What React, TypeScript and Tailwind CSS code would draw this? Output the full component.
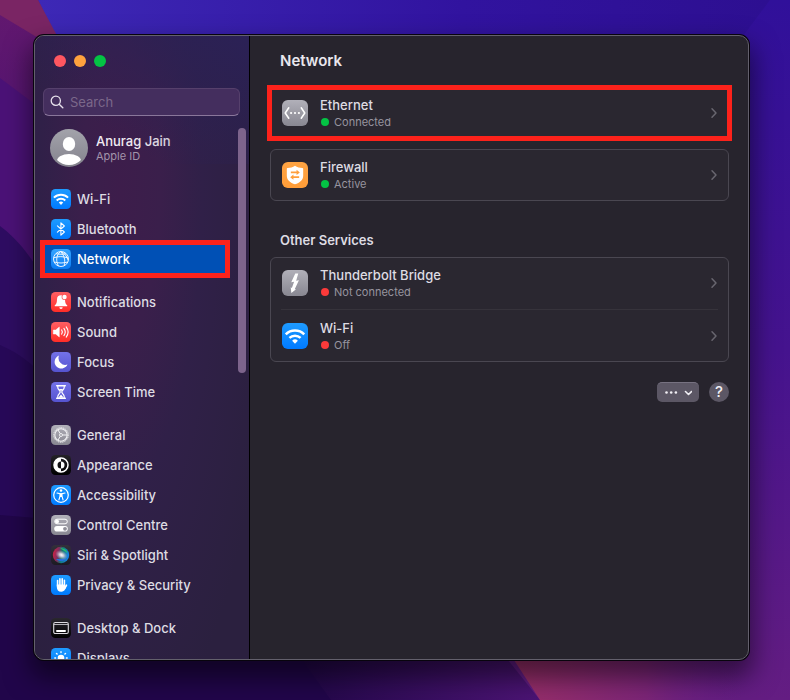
import React from "react";
import type { ReactNode } from "react";

function Tile({ from, to, large, children }: { from: string; to: string; large?: boolean; children: ReactNode }) {
  const id = React.useId();
  return (
    <svg viewBox="0 0 20 20" className={large ? "size-[26px] shrink-0" : "size-5 shrink-0"} aria-hidden="true">
      <defs>
        <linearGradient id={id} x1="0" y1="0" x2="0" y2="1">
          <stop offset="0" stopColor={from} />
          <stop offset="1" stopColor={to} />
        </linearGradient>
      </defs>
      <rect width="20" height="20" rx="4.5" fill={`url(#${id})`} />
      {children}
    </svg>
  );
}

function WifiIcon({ large }: { large?: boolean }) {
  return (
    <Tile from="#1e9bff" to="#007aff" large={large}>
      <g fill="none" stroke="#fff" strokeWidth="1.9">
        <path d="M2.9 8.7a10 10 0 0 1 14.2 0" />
        <path d="M5.7 11.5a6.1 6.1 0 0 1 8.6 0" />
      </g>
      <path d="M10 15.9l-2.2-2.3a3.1 3.1 0 0 1 4.4 0z" fill="#fff" />
    </Tile>
  );
}

function BluetoothIcon() {
  return (
    <Tile from="#1e9bff" to="#007aff">
      <path d="M6.4 6.8l7 6.2-3.5 3.2V3.8L13.4 7l-7 6.2" fill="none" stroke="#fff" strokeWidth="1.1" strokeLinejoin="round" strokeLinecap="round" />
    </Tile>
  );
}

function GlobeIcon() {
  return (
    <Tile from="#35a5ff" to="#0a7cf5">
      <g fill="none" stroke="#fff" strokeWidth="0.9">
        <circle cx="10" cy="10" r="7.5" />
        <path d="M9.5 2.6C5.200 6 4.600 12 7.500 17M9.500 2.600c3.800 3.400 5.200 9 3.600 14M9.500 2.600c3.700 1.200 6.300 4 7.600 8.600M2.700 8.800c4.600-1.600 9.600-1.600 14.300.2M3.200 13c4.500 1.300 9.100 1.300 13.600 0M5 4.700c3.300.7 6.700.7 10 .2" />
      </g>
    </Tile>
  );
}

function BellIcon() {
  return (
    <Tile from="#ff5f63" to="#ff2d27">
      <path d="M10 3.2a4 4 0 0 0-4 4c0 3.3-.6 4.500-2.100 6-.4.500-.2 1 .4 1h11.400c.6 0 .8-.5.4-1-1.500-1.500-2.100-2.700-2.100-6a4 4 0 0 0-4-4z" fill="#fff" />
      <path d="M8.300 15.300h3.400a1.700 1.700 0 0 1-3.400 0z" fill="#fff" />
      <circle cx="13.500" cy="5" r="2.900" fill="#ff5558" />
      <circle cx="13.500" cy="5" r="2.200" fill="#fff" />
    </Tile>
  );
}

function SoundIcon() {
  return (
    <Tile from="#ff5f63" to="#ff2d27">
      <path d="M2.300 8h2.400l3.600-3v10L4.700 12H2.300z" fill="#fff" stroke="#fff" strokeWidth="0.500" strokeLinejoin="round" />
      <g fill="none" stroke="#fff" strokeWidth="1.100" strokeLinecap="round">
        <path d="M10.600 7.900a3.500 3.500 0 0 1 0 4.200" />
        <path d="M12.900 6.400a6 6 0 0 1 0 7.200" />
        <path d="M15.200 4.900a8.500 8.500 0 0 1 0 10.200" />
      </g>
    </Tile>
  );
}

function MoonIcon() {
  return (
    <Tile from="#7371e8" to="#5553cf">
      <path d="M8 3.600a6.700 6.700 0 1 0 8.500 8.900A6.800 6.800 0 0 1 8 3.600z" fill="#fff" />
    </Tile>
  );
}

function HourglassIcon() {
  return (
    <Tile from="#7371e8" to="#5553cf">
      <path d="M5.700 3.800h8.600M5.700 16.200h8.600" stroke="#fff" strokeWidth="1.500" strokeLinecap="round" />
      <path d="M6.800 4v1.600c0 2 2.400 3 2.400 4.400s-2.400 2.400-2.400 4.400V16M13.200 4v1.600c0 2-2.400 3-2.400 4.400s2.400 2.400 2.400 4.400V16" fill="none" stroke="#fff" strokeWidth="1.200" />
      <path d="M7.800 7h4.400L10 9.300zM7.300 15.700L10 12.500l2.700 3.200z" fill="#fff" />
    </Tile>
  );
}

function GearIcon() {
  return (
    <Tile from="#b1b0b9" to="#888791">
      <g fill="none" stroke="#f4f4f6">
        <circle cx="10" cy="10" r="7.300" strokeWidth="1" strokeDasharray="1.150 0.760" />
        <circle cx="10" cy="10" r="6.200" strokeWidth="1.100" />
        <circle cx="10" cy="10" r="1.500" strokeWidth="0.900" />
        <path d="M11.500 10H16M9.200 8.600L7 4.900M9.200 11.400L7 15.100" strokeWidth="1" />
      </g>
    </Tile>
  );
}

function AppearanceIcon() {
  return (
    <Tile from="#242227" to="#000">
      <circle cx="10" cy="10" r="7" fill="none" stroke="#fff" strokeWidth="1.500" />
      <path d="M10 3a7 7 0 0 0 0 14v-3.500a3.500 3.500 0 0 1 0-7z" fill="#fff" />
      <path d="M10 6.500a3.500 3.500 0 0 1 0 7z" fill="#fff" />
    </Tile>
  );
}

function AccessibilityIcon() {
  return (
    <Tile from="#1e9bff" to="#007aff">
      <circle cx="10" cy="10" r="7.300" fill="none" stroke="#fff" strokeWidth="1.200" />
      <circle cx="10" cy="5.600" r="1.250" fill="#fff" />
      <path d="M6 8l3 .7v2.500L7.900 15M14 8l-3 .7v2.500l1.100 3.800M9 8.800h2" fill="none" stroke="#fff" strokeWidth="1.100" strokeLinecap="round" />
      <path d="M9 8.500h2v3.500H9z" fill="#fff" />
    </Tile>
  );
}

function ControlIcon() {
  return (
    <Tile from="#b1b0b9" to="#888791">
      <rect x="3.700" y="4.200" width="12.600" height="4.600" rx="2.300" fill="none" stroke="#fff" strokeWidth="1" />
      <circle cx="6" cy="6.500" r="2" fill="#fff" />
      <rect x="3.200" y="11" width="13.600" height="5.600" rx="2.800" fill="#fff" />
      <circle cx="14" cy="13.800" r="1.900" fill="#8f8e98" />
    </Tile>
  );
}

function SiriIcon() {
  return (
    <Tile from="#33303a" to="#1c1a22">
      <defs>
        <radialGradient id="siri-core">
          <stop offset="0" stopColor="#fff" />
          <stop offset="0.350" stopColor="#e4d7e6" stopOpacity="0.850" />
          <stop offset="1" stopColor="#a8a0b5" stopOpacity="0" />
        </radialGradient>
        <linearGradient id="siri-ring" x1="0" y1="0" x2="1" y2="0.200">
          <stop offset="0" stopColor="#e01f3f" />
          <stop offset="0.400" stopColor="#7c2f61" />
          <stop offset="0.620" stopColor="#157c72" />
          <stop offset="1" stopColor="#1682e8" />
        </linearGradient>
      </defs>
      <circle cx="10" cy="10" r="8.200" fill="url(#siri-ring)" />
      <path d="M9 3c4 .2 7 2 7.500 5.500-2-2.500-4.500-3-7.500-5.500z" fill="#25c16d" />
      <path d="M5 14c3 3 8 3 11-1-3 1.200-7 1-11 1z" fill="#2471db" />
      <ellipse cx="10.500" cy="10" rx="6.500" ry="4.500" fill="url(#siri-core)" transform="rotate(25 10.500 10)" />
    </Tile>
  );
}

function HandIcon() {
  return (
    <Tile from="#1e9bff" to="#007aff">
      <g stroke="#fff" strokeWidth="1.600" strokeLinecap="round" fill="none">
        <path d="M6.600 5.500V11M8.900 3.900V10M11.200 3.700V10M13.400 5.200V11" />
        <path d="M15.500 10.100l-1.600 3" />
      </g>
      <path d="M5.800 9.500h8.400v1.700l1.500-1.400c-.7 3.700-1.900 6.900-5.300 6.900-3.200 0-4.600-2-4.600-5z" fill="#fff" />
    </Tile>
  );
}

function DockIcon() {
  return (
    <Tile from="#2a282e" to="#000">
      <rect x="2.700" y="4.500" width="14.600" height="11" rx="1.600" fill="none" stroke="#dcdbe0" strokeWidth="1.100" />
      <path d="M3 6.500h14" stroke="#dcdbe0" strokeWidth="0.800" />
      <rect x="5.200" y="12" width="9.600" height="2" rx="0.400" fill="#fff" />
    </Tile>
  );
}

function SunIcon() {
  return (
    <Tile from="#1e9bff" to="#007aff">
      <circle cx="10" cy="10" r="3.300" fill="#fff" />
      <path d="M10 3.800v.8M10 15.400v.8M3.800 10h.8M15.400 10h.8M5.500 5.500l.6.6M13.900 13.900l.6.6M5.500 14.500l.6-.6M13.900 6.100l.6-.6" stroke="#fff" strokeWidth="1.400" strokeLinecap="round" />
    </Tile>
  );
}

function EthernetIcon() {
  return (
    <Tile from="#b1b0b9" to="#888791" large>
      <path d="M5.200 6L2.500 10l2.700 4M14.800 6l2.700 4-2.700 4" fill="none" stroke="#fff" strokeWidth="1.200" strokeLinecap="round" strokeLinejoin="round" />
      <g fill="#fff">
        <circle cx="7" cy="10" r="0.850" />
        <circle cx="10" cy="10" r="0.850" />
        <circle cx="13" cy="10" r="0.850" />
      </g>
    </Tile>
  );
}

function FirewallIcon() {
  return (
    <Tile from="#ffa443" to="#ff9d38" large>
      <path d="M10 2.900c1.700 1.200 3.600 1.700 5.700 1.700.4 0 .6.300.6.600v5.300c0 3.300-2.600 5.200-6.300 6.700-3.700-1.500-6.300-3.400-6.300-6.700V5.200c0-.3.200-.6.600-.6 2.100 0 4-.5 5.700-1.700z" fill="#fff" />
      <path d="M6.800 8h5M7.900 11.700h5.300" stroke="#ff9f3c" strokeWidth="1.300" />
      <path d="M11.200 6L13.700 8l-2.500 2zM8.800 9.700l-2.500 2 2.500 2z" fill="#ff9f3c" />
    </Tile>
  );
}

function ThunderboltIcon() {
  return (
    <Tile from="#b1b0b9" to="#888791" large>
      <path d="M10.200 2.600h2.300l-1.600 5.600 2.100-.3-3.200 6.900 1 .1-3.600 2.700-.5-4.300.9.500 1.700-4.700-2.200.3z" fill="#fff" />
    </Tile>
  );
}

function Chevron() {
  return (
    <svg viewBox="0 0 8 12" className="h-3 w-2 shrink-0" aria-hidden="true">
      <path d="M2 1.800L6 6l-4 4.200" fill="none" stroke="#68666f" strokeWidth="1.500" strokeLinecap="round" strokeLinejoin="round" />
    </svg>
  );
}

const groups: { label: string; icon: ReactNode }[][] = [
  [
    { label: "Wi-Fi", icon: <WifiIcon /> },
    { label: "Bluetooth", icon: <BluetoothIcon /> },
    { label: "Network", icon: <GlobeIcon /> },
  ],
  [
    { label: "Notifications", icon: <BellIcon /> },
    { label: "Sound", icon: <SoundIcon /> },
    { label: "Focus", icon: <MoonIcon /> },
    { label: "Screen Time", icon: <HourglassIcon /> },
  ],
  [
    { label: "General", icon: <GearIcon /> },
    { label: "Appearance", icon: <AppearanceIcon /> },
    { label: "Accessibility", icon: <AccessibilityIcon /> },
    { label: "Control Centre", icon: <ControlIcon /> },
    { label: "Siri & Spotlight", icon: <SiriIcon /> },
    { label: "Privacy & Security", icon: <HandIcon /> },
  ],
  [
    { label: "Desktop & Dock", icon: <DockIcon /> },
    { label: "Displays", icon: <SunIcon /> },
  ],
];

function NavItem({ label, icon }: { label: string; icon: ReactNode }) {
  const selected = label === "Network";
  return (
    <li className="relative">
      <a
        href="#"
        aria-current={selected ? "page" : undefined}
        className={
          selected
            ? "flex h-[30px] items-center gap-1.5 bg-[#0050b5] px-2 text-white"
            : "flex h-[30px] items-center gap-1.5 px-2"
        }
      >
        {icon}
        <span className="pt-0.5">{label}</span>
      </a>
      {selected && <span className="pointer-events-none absolute -inset-x-[3px] -inset-y-1 border-5 border-[#fc221b]" />}
    </li>
  );
}

function Sidebar() {
  return (
    <aside className="relative flex w-[215px] shrink-0 flex-col overflow-hidden border-r border-black bg-[radial-gradient(ellipse_at_40%_25%,#3d1d4b_0%,#3a1f4b_22%,#302048_45%,#2b203f_85%)] pr-[9px] pl-2">
      <div className="pointer-events-none absolute inset-x-0 top-0 h-32 bg-linear-to-bl from-[#2b2156] to-transparent to-70%" />
      <div className="relative flex gap-2 px-[11px] pt-[19px]">
        <button type="button" aria-label="Close" className="size-3 rounded-full bg-[#ff5660]" />
        <button type="button" aria-label="Minimise" className="size-3 rounded-full bg-[#ffa23e]" />
        <button type="button" aria-label="Zoom" className="size-3 rounded-full bg-[#04c344]" />
      </div>
      <label className="relative mt-[21px] flex h-7 shrink-0 items-center gap-1.5 rounded-md border border-[#56406c] border-b-[#8a779b] bg-[#442e5e] px-1.5">
        <svg viewBox="0 0 14 14" className="size-3.5 shrink-0" aria-hidden="true">
          <circle cx="5.800" cy="5.800" r="4.600" fill="none" stroke="#e6e0eb" strokeWidth="1.300" />
          <path d="M9.200 9.200l3.600 3.600" stroke="#e6e0eb" strokeWidth="1.400" strokeLinecap="round" />
        </svg>
        <input type="search" aria-label="Search" placeholder="Search" className="min-w-0 flex-1 bg-transparent pt-0.5 font-normal outline-none placeholder:text-[#7b688a]" />
      </label>
      <div className="flex shrink-0 items-center gap-2 px-[7px] pt-[13px]">
        <svg viewBox="0 0 38 38" className="size-[38px] shrink-0" aria-hidden="true">
          <defs>
            <linearGradient id="avatar-fill" x1="0" y1="0" x2="0" y2="1">
              <stop offset="0" stopColor="#a3a3ab" />
              <stop offset="1" stopColor="#84838d" />
            </linearGradient>
            <clipPath id="avatar-clip">
              <circle cx="19" cy="19" r="17" />
            </clipPath>
          </defs>
          <circle cx="19" cy="19" r="19" fill="url(#avatar-fill)" />
          <ellipse cx="19" cy="15" rx="6.200" ry="7" fill="#fff" />
          <ellipse cx="19" cy="32" rx="12" ry="7" fill="#fff" clipPath="url(#avatar-clip)" />
        </svg>
        <div>
          <p className="leading-4 text-[#f0ecf2]">Anurag Jain</p>
          <p className="text-[11px] leading-3.5 font-normal text-[#a294aa]">Apple ID</p>
        </div>
      </div>
      <nav aria-label="Settings" className="mt-[17px] flex flex-col gap-[13px] pr-[13px]">
        {groups.map((items) => (
          <ul key={items[0].label}>
            {items.map((item) => (
              <NavItem key={item.label} label={item.label} icon={item.icon} />
            ))}
          </ul>
        ))}
      </nav>
      <div className="absolute top-[92px] right-[3px] h-[245px] w-2 rounded-full bg-[#7d648c]" />
    </aside>
  );
}

function ServiceRow({ title, status, on, icon }: { title: string; status: string; on?: boolean; icon: ReactNode }) {
  return (
    <button type="button" className="flex h-[50px] w-full items-center gap-3 pr-2.5 pl-[11px] text-left">
      {icon}
      <span className="flex flex-1 flex-col">
        <span className="leading-[17px]">{title}</span>
        <span className="flex items-center gap-[5px] pl-px text-[11px] leading-4 font-normal text-[#97949f]">
          <span className={on ? "size-2 rounded-full bg-[#04c344]" : "size-2 rounded-full bg-[#fb3a3a]"} />
          {status}
        </span>
      </span>
      <Chevron />
    </button>
  );
}

function Wallpaper() {
  return (
    <svg viewBox="0 0 790 700" preserveAspectRatio="none" className="absolute inset-0 size-full" aria-hidden="true">
      <defs>
        <linearGradient id="wp-base" x1="0" y1="0" x2="0" y2="1">
          <stop offset="0" stopColor="#30109a" />
          <stop offset="0.500" stopColor="#45138e" />
          <stop offset="1" stopColor="#641d82" />
        </linearGradient>
        <linearGradient id="wp-top" x1="0" y1="0" x2="1" y2="0">
          <stop offset="0" stopColor="#3e2ab8" />
          <stop offset="0.600" stopColor="#31139f" />
          <stop offset="1" stopColor="#2d0f91" />
        </linearGradient>
        <linearGradient id="wp-left" x1="0" y1="0" x2="0" y2="1">
          <stop offset="0" stopColor="#63186f" />
          <stop offset="1" stopColor="#3f1172" />
        </linearGradient>
        <linearGradient id="wp-bottom" x1="0" y1="0" x2="1" y2="0">
          <stop offset="0" stopColor="#210747" />
          <stop offset="1" stopColor="#4c1475" />
        </linearGradient>
        <linearGradient id="wp-pink" x1="0" y1="0" x2="1" y2="0">
          <stop offset="0" stopColor="#9c3067" />
          <stop offset="0.500" stopColor="#7c2577" />
          <stop offset="0.850" stopColor="#641d82" stopOpacity="0" />
        </linearGradient>
      </defs>
      <rect width="790" height="700" fill="url(#wp-base)" />
      <path d="M0 0h770l-45 60H0z" fill="url(#wp-top)" />
      <path d="M0 0h38l90 180v120H0z" fill="url(#wp-left)" />
      <path d="M0 0h38l24 45L35 36 0 15z" fill="#7a2564" />
      <path d="M0 78l60 45v160H0z" fill="#4b1277" />
      <path d="M0 226c20 15 35 35 60 80v394H0z" fill="#2e0d62" />
      <path d="M0 345c20 8 40 24 60 50v305H0z" fill="#270958" />
      <path d="M0 515l60 5h220l60 180H0z" fill="#21064a" />
      <path d="M295 650h205l40 50H331z" fill="url(#wp-bottom)" />
      <path d="M501 640h289v60H540z" fill="url(#wp-pink)" />
    </svg>
  );
}

export default function App() {
  return (
    <div className="relative flex h-screen bg-[#30109a] pt-[35px] pr-[41px] pb-10 pl-[34px] font-['Inter','Liberation_Sans',sans-serif] text-[13px] font-medium text-[#dedce3]">
      <Wallpaper />
      <div className="relative flex min-w-0 flex-1 overflow-hidden rounded-[10px] border border-[#63606c] bg-[#27242d] shadow-[0_0_0_1px_#08040d,0_14px_26px_4px_rgba(0,0,0,0.5)]">
        <Sidebar />
        <main className="min-w-0 flex-1 pr-[19px] pl-5">
          <h1 className="px-2.5 pt-[15px] text-[15px] leading-5 font-semibold text-[#e9e7ed]">Network</h1>
          <section className="relative mt-4 rounded-md border border-[#4a4751] bg-[#2a2730]">
            <ServiceRow title="Ethernet" status="Connected" on icon={<EthernetIcon />} />
            <span className="pointer-events-none absolute -inset-x-1 -inset-y-[3px] border-5 border-[#fc221b]" />
          </section>
          <section className="mt-2.5 rounded-md border border-[#4a4751] bg-[#2a2730]">
            <ServiceRow title="Firewall" status="Active" on icon={<FirewallIcon />} />
          </section>
          <h2 className="mt-[30px] mb-2 px-2.5 leading-[18px] font-semibold">Other Services</h2>
          <section className="rounded-md border border-[#4a4751] bg-[#2a2730]">
            <ServiceRow title="Thunderbolt Bridge" status="Not connected" icon={<ThunderboltIcon />} />
            <hr className="mx-2.5 my-px border-[#36333b]" />
            <ServiceRow title="Wi-Fi" status="Off" icon={<WifiIcon large />} />
          </section>
          <div className="mt-5 flex justify-end gap-2.5">
            <button type="button" aria-label="More actions" className="flex h-5 w-[42px] items-center justify-center rounded-[5px] border-t border-[#777281] bg-[#5c5765]">
              <svg viewBox="0 0 28 12" className="h-3 w-7" aria-hidden="true">
                <g fill="#f1eff4">
                  <circle cx="2.500" cy="5.500" r="1.300" />
                  <circle cx="7.200" cy="5.500" r="1.300" />
                  <circle cx="11.900" cy="5.500" r="1.300" />
                </g>
                <path d="M21.500 4.500l3 3 3-3" fill="none" stroke="#f1eff4" strokeWidth="1.600" strokeLinecap="round" strokeLinejoin="round" />
              </svg>
            </button>
            <button type="button" aria-label="Help" className="size-5 rounded-full bg-[#5c5765] text-[15px] leading-5 text-[#f1eff4]">
              ?
            </button>
          </div>
        </main>
      </div>
    </div>
  );
}
